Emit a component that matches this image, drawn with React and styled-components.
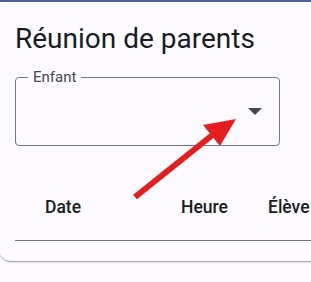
import React from "react";
import styled, { createGlobalStyle } from "styled-components";

const Global = createGlobalStyle`
  html, body { margin: 0; padding: 0; background: #fcfaff; overflow: hidden; }
  body { font-family: Roboto, "Liberation Sans", sans-serif; }
`;

const Page = styled.div`
  position: relative;
  width: 311px;
  height: 282px;
  overflow: hidden;
`;

const TopBar = styled.div`
  height: 2px;
  background: #4b6390;
`;

const Card = styled.div`
  margin: 2px 0 0 -1px;
  width: 360px;
  height: 257px;
  box-sizing: border-box;
  border-radius: 12px;
  background: #fdfbff;
  box-shadow: 0px 2px 1px -1px rgba(0,0,0,0.2), 0px 1px 1px 0px rgba(0,0,0,0.14), 0px 1px 3px 0px rgba(0,0,0,0.12);
  padding: 17px 0 0 16px;
  display: flex;
  flex-direction: column;
`;

const Title = styled.h1`
  margin: 0;
  font-size: 28px;
  line-height: 36px;
  font-weight: 400;
  color: #1b1b1f;
  letter-spacing: 0;
`;

const Field = styled.div`
  position: relative;
  margin-top: 20px;
  width: 265px;
  height: 69px;
  box-sizing: border-box;
`;

const Outline = styled.fieldset`
  position: absolute;
  inset: 0;
  margin: 0;
  padding: 0 8px;
  border: 1px solid #74777f;
  border-radius: 4px;
  top: -5px;
  height: 74px;
  box-sizing: border-box;
`;

const Legend = styled.legend`
  padding: 0 5px;
  margin-left: 4px;
  font-size: 15px;
  line-height: 10px;
  color: #44474e;
  font-family: Roboto, "Liberation Sans", sans-serif;
`;

const Arrow = styled.svg`
  position: absolute;
  right: 18px;
  top: 31px;
`;

const HeaderRow = styled.div`
  margin-top: 49px;
  display: grid;
  grid-template-columns: 136px 87px 1fr;
  padding: 0 0 0 30px;
  height: 46px;
  border-bottom: 1px solid #74777f;
  box-sizing: border-box;
`;

const HeaderCell = styled.div`
  font-size: 17.5px;
  font-weight: 500;
  color: #1a1c1e;
  line-height: 24px;
  white-space: nowrap;
`;

const Annotation = styled.svg`
  position: absolute;
  left: 0;
  top: 0;
  pointer-events: none;
`;

export default function App() {
  return (
    <Page>
      <Global />
      <TopBar />
      <Card>
        <Title>Réunion de parents</Title>
        <Field>
          <Outline>
            <Legend>Enfant</Legend>
          </Outline>
          <Arrow width="14" height="7" viewBox="0 0 14 7">
            <path d="M0 0 L14 0 L7 7 Z" fill="#44474e" />
          </Arrow>
        </Field>
        <HeaderRow>
          <HeaderCell>Date</HeaderCell>
          <HeaderCell>Heure</HeaderCell>
          <HeaderCell>Élève</HeaderCell>
        </HeaderRow>
      </Card>
      <Annotation width="311" height="282" viewBox="0 0 311 282">
        <line x1="135" y1="197" x2="215" y2="133" stroke="#e41e1e" strokeWidth="6" />
        <polygon points="236,119 203,125 220,146" fill="#e41e1e" />
      </Annotation>
    </Page>
  );
}
